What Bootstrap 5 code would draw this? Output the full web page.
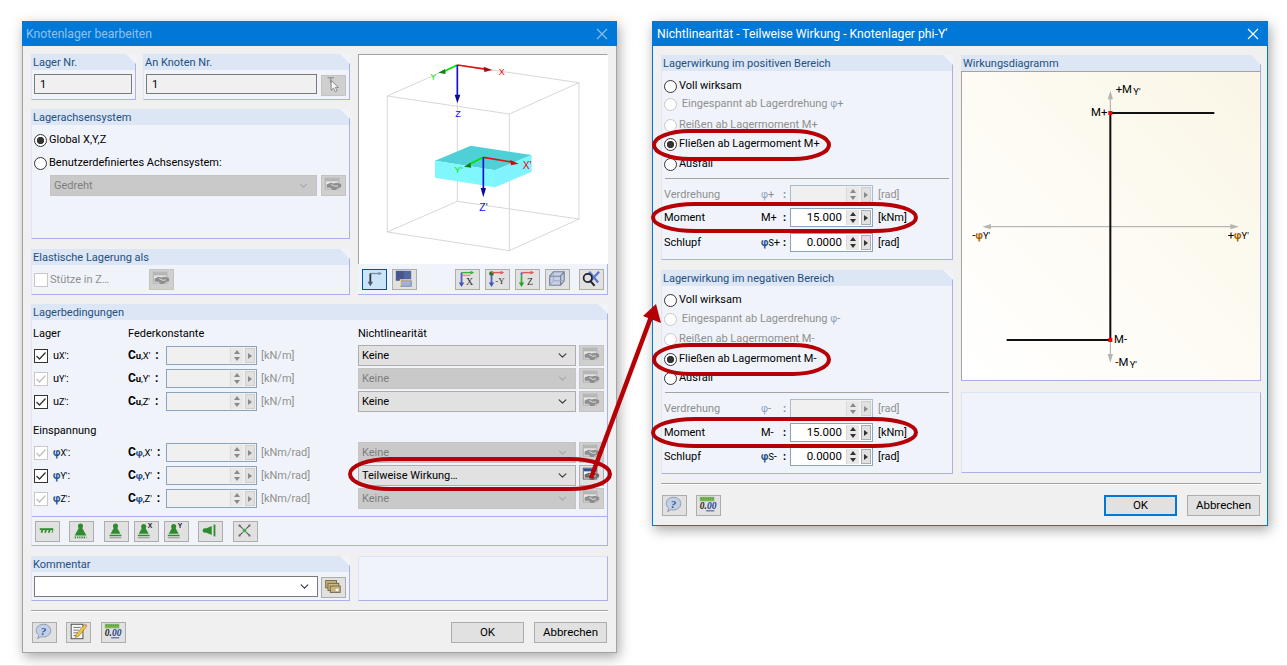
<!DOCTYPE html>
<html lang="de">
<head>
<meta charset="utf-8">
<title>Knotenlager bearbeiten</title>
<link rel="stylesheet" href="https://cdn.jsdelivr.net/npm/bootstrap@5.3.0/dist/css/bootstrap.min.css">
<style>
html,body{height:666px;overflow:hidden;background:#fff}
body{font:11px/16px Roboto,"Noto Sans","Liberation Sans",sans-serif;color:#000;border-bottom:1px solid #e3e3e3}
.desk{position:relative;width:1287px;height:665px}
.dlg{position:absolute;background:#f0f0f0;box-shadow:2px 4px 12px rgba(0,0,0,.35)}
.dlg-a{left:22px;top:21px;width:595px;height:632px;border:1px solid #a3a3a3;border-top:0}
.dlg-b{left:652px;top:21px;width:616px;height:505px;border:1px solid #0078d7;border-top:0}
.dlg-title{height:25px;background:#0078d7;font-size:12.2px;padding:0 9px 0 4px}
.dlg-a .dlg-title{margin:0 -1px;color:#8fc1ee}
.dlg-b .dlg-title{margin:0 -1px;padding-left:5px;color:#fff}
.dlg-a .dlg-body{padding:8px 8px 0}
.dlg-b .dlg-body{padding:9px 6px 0 8px}
.col-l{width:319px}
.col-r{width:250px}
.h-46{height:46px}
.h-130{height:130px}
.h-45{height:45px}
.grp{background:#f0f4fa}
.grp-h{height:16px;background:#dce6f4;color:#24507f;padding-left:2px;line-height:18px;overflow:hidden;border-right:1px solid #aab0e8;clip-path:polygon(0 0,calc(100% - 10px) 0,100% 10px,100% 100%,0 100%)}
.grp-b{border:1px solid #aab0e8;border-top:0;border-left-color:#dce6f4}
.w-105{width:105px}.w-207{width:207px}
.ctl-in.form-control{height:20px;min-height:0;border:1px solid #7a7a7a;border-radius:0;background:#f0f0f0;padding:0 5px;font-size:11px;line-height:18px;color:#000;box-shadow:none}
.w-98{width:98px}.w-171{width:171px}
.ctl-pad{padding-left:2px}
.ctl-pad-a{padding-left:2px;gap:4px}
.tb{width:25px;height:21px;padding:0;background:#e1e1e1;border:1px solid #adadad;border-radius:0;display:inline-flex;align-items:center;justify-content:center;flex:none}
.tb svg{display:block}
.tb.off{background:#cfcfcf;border-color:#c4c4c4}
.tb.act{background:#cce4f7;border-color:#005499}
.form-check-input[type=radio],.form-check-input[type=checkbox]{width:13px;height:13px;margin:0;flex:none;background-color:#fff;border:1px solid #333;box-shadow:none;opacity:1;float:none}
.form-check-input[type=checkbox]{border-radius:0;border-color:#333;width:14px;height:14px}
.form-check-input:checked{background-color:#fff;border-color:#333}
.form-check-input:checked[type=radio]{background-image:radial-gradient(circle,#333 0,#333 3.4px,transparent 3.9px)}
.form-check-input:checked[type=checkbox]{background-image:url("data:image/svg+xml,%3Csvg xmlns='http://www.w3.org/2000/svg' viewBox='0 0 14 14'%3E%3Cpath fill='none' stroke='%23333' stroke-width='1.3' d='M2.5 7l3 3 6-6.5'/%3E%3C/svg%3E");background-size:14px 14px}
.form-check-input:disabled{border-color:#c8c8c8;opacity:1}
.form-check-input:disabled:checked{border-color:#c8c8c8}
.form-check-input:disabled:checked[type=checkbox]{background-image:url("data:image/svg+xml,%3Csvg xmlns='http://www.w3.org/2000/svg' viewBox='0 0 14 14'%3E%3Cpath fill='none' stroke='%23c0c0c0' stroke-width='1.3' d='M2.5 7l3 3 6-6.5'/%3E%3C/svg%3E")}
.rd{height:16px;gap:2px;padding-left:2px}
.dim{color:#8f8f8f}
.form-select.ddl{height:21px;min-height:0;padding:0 18px 0 3px;font-size:11px;line-height:19px;border:1px solid #adadad;border-radius:0;background-color:#e1e1e1;color:#000;box-shadow:none;background-position:right 7px center;background-size:11px 9px;opacity:1}
.form-select.ddl:disabled{background-color:#c9c9c9;border-color:#c4c4c4;color:#7f7f7f;background-image:url("data:image/svg+xml,%3Csvg xmlns='http://www.w3.org/2000/svg' viewBox='0 0 16 16'%3E%3Cpath fill='none' stroke='%23a8a8a8' stroke-width='2' d='m2 5 6 6 6-6'/%3E%3C/svg%3E")}
.form-select.ddl.wht{background-color:#fff;border-color:#7a7a7a}
.w-267{width:267px}.w-284{width:284px}
.ind-sel{padding-left:18px;gap:4px}
.cb-cell{width:117px;margin-top:3px}
.bc-wrap{padding:6px 1px 5px}
.rowg{display:grid;grid-template-columns:95px 38px 91px 101px 218px 28px;height:21px;align-items:center;margin-bottom:2px}
.rowg .tb{margin-left:3px}
.sym{padding-left:1px;display:flex;align-items:center;gap:5px}
.hdrg{display:grid;grid-template-columns:95px 38px 91px 101px 218px;height:16px;align-items:center}
.sub{font-size:9px}
.phi{color:#24508f;font-weight:700;font-size:10px}
.dim .phi{color:#8d9dbb;font-weight:400}
.clb{font-weight:700;font-size:12px;white-space:nowrap;letter-spacing:-.1px}
.clb i{font-style:normal;font-weight:700;font-size:9.5px}
.clb em{font-style:normal;font-weight:400;font-size:9.5px}
.clb u{text-decoration:none;margin-left:5px}
.phb{color:#24508f}
.un-pad{padding-left:4px}
.spn{height:19px;border:1px solid #8aa4bf;background:#f0f0f0;width:91px;flex:none}
.spn.wht{background:#fff;width:83px}
.spn.dm{width:83px;border-color:#a9bccf}
.spn-v{flex:1;text-align:right;padding:0 4px 0 0;font-size:11.5px;line-height:17px}
.spn-ud{width:13px;border-left:1px solid #dadada;background:#e8e8e8;margin:1px 0}
.spn-ud span{flex:1;display:flex;align-items:center;justify-content:center}
.spn-ud span::before{content:"";border:3.5px solid transparent}
.spn-ud .up::before{border-bottom:4px solid #8a8a8a;border-top:0}
.spn-ud .dn::before{border-top:4px solid #8a8a8a;border-bottom:0}
.spn-r{width:10px;margin:1px 1px 1px 2px;background:#e1e1e1;border:1px solid #cfcfcf;display:flex;align-items:center;justify-content:center}
.spn-r::before{content:"";border-left:4px solid #8a8a8a;border-top:3px solid transparent;border-bottom:3px solid transparent}
.spn.wht .spn-ud .up::before{border-bottom-color:#333}
.spn.wht .spn-ud .dn::before{border-top-color:#333}
.spn.wht .spn-r::before{border-left-color:#333}
.spn.wht .spn-r{border-color:#adadad}
.pv{height:210px;border:1px solid #a3a3a3;border-width:1px 0 0 1px;background:#fff;border-right:1px solid #fff}
.pv svg{display:block}
.pvbar{height:31px;padding:5px 0 0 4px;background:#f0f4fa;border:1px solid #aab0e8;border-width:0 1px 1px 0}
.ms-5x{margin-left:5px}
.ms-9x{margin-left:9px}
.ms-10x{margin-left:10px}
.ms-38x{margin-left:38px}
.ms-px{margin-left:1px}
.barg{height:29px;padding:4px 0 0 3px;border-top:1px solid #aab0e8}
.kom{padding:4px 0 0 2px;gap:3px}
.mt-1x{margin-top:1px}
.sp{height:2px;border-top:1px solid #a3a3a3;border-bottom:1px solid #fff}
.foot-row{margin-top:10px;padding:0 1px}
.gap-9x{gap:9px}
.gap-10x{gap:10px}
.pb-btn{height:21px;padding:0;width:73px;font-size:11.5px;line-height:19px;background:#e1e1e1;border:1px solid #adadad;border-radius:0;color:#000}
.pb-btn.df{border:2px solid #0078d7;line-height:17px}
.mt-9{margin-top:9px}.mt-10{margin-top:10px}
.mtx-2{margin-top:2px}.mtx-3{margin-top:3px}.mtx-4{margin-top:4px}.mtx-5{margin-top:5px}.mtx-6{margin-top:6px}.mtx-7{margin-top:7px}.mtx-11{margin-top:11px}
.g-left{width:292px}
.g-right{width:300px}
.rsec{height:205px}.rsec2{height:204px}
.rsp{background:#a3a3a3;height:1px;margin-left:3px;margin-right:3px}
.frm{display:grid;grid-template-columns:97px 29px 83px auto;height:19px;align-items:center;padding-left:2px}
.frm .unit{padding-left:5px}
.sycell{display:flex;justify-content:space-between;padding-right:4px;white-space:nowrap}
.diag{height:310px;background:linear-gradient(to top right,#fff 0,#fdfbf3 50%,#faf5e5 100%);border:1px solid #aab0e8;border-top-color:#a3a3a3;border-left-color:#a3a3a3}
.diag svg{display:block}
.emptyp{height:81px;background:#f0f4fa;border:1px solid #aab0e8;border-top-color:#dce4f8;border-left-color:#dce4f8}
.emptyp.h-45{height:45px}
.anno{position:absolute;left:0;top:0;pointer-events:none}
</style>
</head>
<body>
<svg width="0" height="0" class="position-absolute" aria-hidden="true">
<defs>
<symbol id="s-det" viewBox="0 0 25 21"><rect x="4.500" y="3.500" width="15" height="12" fill="#e4e4e4" stroke="#a9a9a9"/><rect x="5" y="4" width="14" height="3" fill="#b5b5b5"/><path d="M6 10.500l4.500-2 3.500 1 3-1 5 1.500v3.500l-3.500.5-2.500 2.500h-3.500l-2-2.500H6z" fill="#8e8e8e"/><path d="M11 10.500l4 2 3.500-.5" fill="none" stroke="#e8e8e8"/></symbol>
<symbol id="s-det-on" viewBox="0 0 25 21"><rect x="4.500" y="3.500" width="15" height="12" fill="#f4f4f4" stroke="#555"/><rect x="5" y="4" width="14" height="3" fill="#2c4f9c"/><path d="M6 10.500l4.500-2 3.500 1 3-1 5 1.500v3.500l-3.500.5-2.500 2.500h-3.500l-2-2.500H6z" fill="#6b6b6b"/><path d="M11 10.500l4 2 3.500-.5" fill="none" stroke="#eee"/></symbol>
<symbol id="s-pick" viewBox="0 0 25 21"><path d="M7 3h7M10.500 3v6" stroke="#9a9a9a" stroke-width="1.800" fill="none"/><path d="M11 6l0 11 2.600-2.500 2 4 2-1-2-3.800h3.400z" fill="#f6f6f6" stroke="#777" stroke-width=".9"/></symbol>
<symbol id="s-axes" viewBox="0 0 25 21"><path d="M9 5h11" stroke="#7f8ea4" stroke-width="1.500"/><path d="M22 5l-4-2v4z" fill="#7f8ea4"/><path d="M9 5v10" stroke="#333" stroke-width="2"/><path d="M9 19l-3-5h6z" fill="#4a5b73"/></symbol>
<symbol id="s-panes" viewBox="0 0 25 21"><rect x="4" y="2" width="9" height="11" fill="#46568f"/><rect x="13" y="2" width="8" height="11" fill="#5566a4"/><rect x="9" y="13" width="12" height="6" fill="#a5b0d6" stroke="#55649c" stroke-width=".7"/><path d="M9 19v-7h12" stroke="#ffe95a" stroke-width="1.200" fill="none"/></symbol>
<symbol id="s-vx" viewBox="0 0 25 21"><path d="M7 4h12" stroke="#35b435" stroke-width="1.500"/><path d="M21 4l-4-2v4z" fill="#35b435"/><path d="M7 7h10" stroke="#e48585" stroke-width="1.300"/><path d="M7 4v12" stroke="#4a62c8" stroke-width="2"/><path d="M7 20l-3-5h6z" fill="#3f56b8"/><text x="12" y="18" font-family="Liberation Serif" font-size="11" fill="#333">X</text></symbol>
<symbol id="s-vy" viewBox="0 0 25 21"><circle cx="7" cy="5" r="2.600" fill="#1f7a1f"/><path d="M7 4h12" stroke="#e15a5a" stroke-width="1.600"/><path d="M21 4l-4-2v4z" fill="#e15a5a"/><path d="M7 7v9" stroke="#4a62c8" stroke-width="2"/><path d="M7 20l-3-5h6z" fill="#3f56b8"/><text x="11" y="17" font-family="Liberation Serif" font-size="10" fill="#333">-Y</text></symbol>
<symbol id="s-vz" viewBox="0 0 25 21"><path d="M7 4h12" stroke="#e15a5a" stroke-width="1.600"/><path d="M21 4l-4-2v4z" fill="#e15a5a"/><path d="M7 4v3" stroke="#4a62c8" stroke-width="2"/><path d="M7 7v9" stroke="#35b435" stroke-width="2"/><path d="M7 20l-3-5h6z" fill="#28a028"/><text x="13" y="18" font-family="Liberation Serif" font-size="11" fill="#333">Z</text></symbol>
<symbol id="s-box" viewBox="0 0 25 21"><path d="M5 8l4-5h12v10l-4 5H5zM5 8h12v10M17 8l4-5" fill="#c6cfe4" stroke="#76829f" stroke-width="1.300"/><path d="M9 3v10h12M9 13l-4 5" fill="none" stroke="#9ba5c0"/></symbol>
<symbol id="s-zoomx" viewBox="0 0 25 21"><path d="M11 3l10 12M22 3L11 15" stroke="#5b78d0" stroke-width="2.600"/><circle cx="9.500" cy="10" r="4.600" fill="none" stroke="#222" stroke-width="1.900"/><path d="M13 14l4 4.500" stroke="#222" stroke-width="2.200"/></symbol>
<symbol id="s-sup1" viewBox="0 0 25 21"><rect x="5" y="8" width="15" height="2" fill="#2e8b2e"/><path d="M6 13l1-3h2l-1 3zM10 13l1-3h2l-1 3zM14 13l1-3h2l-1 3zM18 13l1-3h1l-1 3z" fill="#2e8b2e"/></symbol>
<symbol id="s-sup2" viewBox="0 0 25 21"><circle cx="12.500" cy="5.500" r="2.800" fill="#2e8b2e"/><path d="M11 7l-5 9h13l-5-9z" fill="#2e8b2e"/><path d="M6 18h13" stroke="#2e8b2e" stroke-dasharray="1.500 1" stroke-width="2"/></symbol>
<symbol id="s-sup3" viewBox="0 0 25 21"><circle cx="12.500" cy="5.500" r="2.800" fill="#2e8b2e"/><path d="M11 7l-4 7h11l-4-7z" fill="#2e8b2e"/><path d="M6 16h13" stroke="#2e8b2e" stroke-width="1.600"/><path d="M6 18.500h13" stroke="#888"/></symbol>
<symbol id="s-sup4" viewBox="0 0 25 21"><circle cx="10.500" cy="6" r="2.800" fill="#2e8b2e"/><path d="M9 7l-4 7h11l-4-7z" fill="#2e8b2e"/><path d="M4 16h13" stroke="#2e8b2e" stroke-width="1.600"/><path d="M4 18.500h13" stroke="#888"/><text x="15" y="8" font-family="Liberation Sans" font-weight="700" font-size="7.500" fill="#222">X</text></symbol>
<symbol id="s-sup5" viewBox="0 0 25 21"><circle cx="10.500" cy="6" r="2.800" fill="#2e8b2e"/><path d="M9 7l-4 7h11l-4-7z" fill="#2e8b2e"/><path d="M4 16h13" stroke="#2e8b2e" stroke-width="1.600"/><path d="M4 18.500h13" stroke="#888"/><text x="15" y="8" font-family="Liberation Sans" font-weight="700" font-size="7.500" fill="#222">Y</text></symbol>
<symbol id="s-sup6" viewBox="0 0 25 21"><circle cx="7.500" cy="10.500" r="2.600" fill="#2e8b2e"/><path d="M8 8.500l7-3v10l-7-3z" fill="#2e8b2e"/><path d="M18 4v13" stroke="#2e8b2e" stroke-width="2"/></symbol>
<symbol id="s-free" viewBox="0 0 25 21"><rect x="10.500" y="8.500" width="4" height="4" fill="#4fa84f"/><path d="M7 5l3.500 3.500M18 5l-3.500 3.500M7 16l3.500-3.500M18 16l-3.500-3.500" stroke="#555" stroke-width="1.200"/><path d="M6 4h2v2H6zM17 4h2v2h-2zM6 15h2v2H6zM17 15h2v2h-2z" fill="#666"/></symbol>
<symbol id="s-folders" viewBox="0 0 25 21"><rect x="5" y="4" width="12" height="8" fill="#c9b582" stroke="#6e633f"/><rect x="7.500" y="7" width="12" height="8" fill="#cdb983" stroke="#6e633f"/><rect x="10" y="10" width="11" height="7" fill="#c9b582" stroke="#6e633f"/><rect x="16" y="13" width="3" height="2.500" fill="#fff"/></symbol>
<symbol id="s-help" viewBox="0 0 25 21"><path d="M12.500 2.500c4.600 0 8 3 8 7s-3.400 7-8 7c-1 0-2 0-2.800-.4L6 18.500l1.200-4C5.600 13.200 4.500 11.500 4.500 9.500c0-4 3.400-7 8-7z" fill="#c2cfe8" stroke="#8b97a8"/><text x="12.500" y="14" text-anchor="middle" font-family="Liberation Serif" font-weight="700" font-style="italic" font-size="12" fill="#2d4f92">?</text></symbol>
<symbol id="s-note" viewBox="0 0 25 21"><rect x="5.500" y="2.500" width="13" height="16" fill="#f6f6f6" stroke="#444"/><path d="M8 6h8M8 9h6M8 12h5M8 15h5" stroke="#666"/><path d="M11 14l9-11 2.500 2-9 11-3.500 1z" fill="#f3c93a" stroke="#7c6414" stroke-width=".6"/><path d="M20 3l2.500 2 1-1.500-2-1.500z" fill="#e58ca0"/></symbol>
<symbol id="s-calc" viewBox="0 0 25 21"><rect x="4" y="2" width="16" height="5" fill="#7dba5a"/><path d="M6 3v2M8.500 3v2M11 3v2M13.500 3v2M16 3v2M18.500 3v2" stroke="#3e7d2a" stroke-width=".8"/><text x="4" y="16" font-family="Liberation Serif" font-weight="700" font-style="italic" font-size="10.500" fill="#222">0.<tspan fill="#23408c">00</tspan></text><path d="M11 17.500h9" stroke="#23408c"/></symbol>
</defs>
</svg>

<div class="desk">
<!-- Knotenlager bearbeiten -->
<section class="dlg dlg-a">
  <div class="dlg-title d-flex align-items-center justify-content-between"><span>Knotenlager bearbeiten</span><svg width="12" height="12" viewBox="0 0 12 12" aria-hidden="true"><path d="M1 1l10 10M11 1L1 11" stroke="#8fc1ee" stroke-width="1.100"/></svg></div>
  <div class="dlg-body">
    <div class="d-flex gap-2">
      <div class="col-l">
        <div class="d-flex justify-content-between h-46">
          <div class="grp w-105 d-flex flex-column"><div class="grp-h">Lager Nr.</div><div class="grp-b flex-grow-1 d-flex align-items-start pt-1 ctl-pad"><input class="form-control ctl-in w-98" value="1" readonly></div></div>
          <div class="grp w-207 d-flex flex-column"><div class="grp-h">An Knoten Nr.</div><div class="grp-b flex-grow-1 d-flex align-items-start pt-1 ctl-pad-a"><input class="form-control ctl-in w-171" value="1" readonly><button class="btn tb off mt-1x" type="button" aria-label="Wählen"><svg width="23" height="19" viewBox="1 1 23 19"><use href="#s-pick"/></svg></button></div></div>
        </div>
        <div class="grp h-130 mt-9 d-flex flex-column">
          <div class="grp-h">Lagerachsensystem</div>
          <div class="grp-b flex-grow-1">
            <label class="rd d-flex align-items-center mtx-7"><input class="form-check-input" type="radio" name="a" checked><span>Global X,Y,Z</span></label>
            <label class="rd d-flex align-items-center mtx-7"><input class="form-check-input" type="radio" name="a"><span>Benutzerdefiniertes Achsensystem:</span></label>
            <div class="d-flex mtx-4 ind-sel"><select class="form-select ddl w-267" disabled aria-label="Achsensystem"><option>Gedreht</option></select><button class="btn tb off" type="button" aria-label="Details"><svg width="23" height="19" viewBox="1 1 23 19"><use href="#s-det"/></svg></button></div>
          </div>
        </div>
        <div class="grp h-46 mt-10 d-flex flex-column">
          <div class="grp-h">Elastische Lagerung als</div>
          <div class="grp-b flex-grow-1 d-flex align-items-start pt-1"><label class="rd d-flex align-items-center dim cb-cell"><input class="form-check-input" type="checkbox" disabled><span>Stütze in Z…</span></label><button class="btn tb off" type="button" aria-label="Details"><svg width="23" height="19" viewBox="1 1 23 19"><use href="#s-det"/></svg></button></div>
        </div>
      </div>
      <div class="col-r">
        <div class="pv"><svg width="249" height="209" viewBox="12 45 747 627" font-family="Liberation Sans">
          <g fill="none" stroke="#cfcfcf" stroke-width="2.500"><path d="M97 168L463 222 672 128 307 75zM97 576L463 632 672 537 307 484zM97 168V576M463 222V632M672 128V537M307 75V484"/></g>
          <path d="M240 362L347 317 530 345 420 391z" fill="#4fd0d6"/><path d="M240 362L420 391V442L240 413z" fill="#80f8fb"/><path d="M420 391L530 345V395L420 442z" fill="#7ff4ff"/>
          <path d="M307 75L395 88" stroke="#e01010" stroke-width="5"/><path d="M412 90L386 80 388 96z" fill="#a01010"/><text x="431" y="104" fill="#f00000" font-size="27">X</text>
          <path d="M307 75L265 95" stroke="#00e000" stroke-width="5"/><path d="M250 98L270 87 272 102z" fill="#108010"/><text x="226" y="120" fill="#10e010" font-size="27">Y</text>
          <path d="M307 75V170" stroke="#1010e0" stroke-width="5"/><path d="M307 190L299 164H316z" fill="#0a0a90"/><text x="301" y="230" fill="#1010e0" font-size="27">Z</text>
          <path d="M385 352L475 367" stroke="#e01010" stroke-width="5"/><path d="M491 371L466 360 468 376z" fill="#c01010"/><text x="503" y="386" fill="#f00000" font-size="31">X'</text>
          <path d="M385 352L340 374" stroke="#00e000" stroke-width="5"/><path d="M327 380L346 368 349 383z" fill="#108010"/><text x="298" y="400" fill="#10e010" font-size="29">Y'</text>
          <path d="M385 352V450" stroke="#1010e0" stroke-width="5"/><path d="M385 472L377 444H393z" fill="#0a0a90"/><text x="373" y="512" fill="#1010e0" font-size="31">Z'</text>
        </svg></div>
        <div class="pvbar d-flex"><button class="btn tb act" type="button" aria-label="Achsen"><svg width="23" height="19" viewBox="1 1 23 19"><use href="#s-axes"/></svg></button><button class="btn tb ms-5x" type="button" aria-label="Ansicht"><svg width="23" height="19" viewBox="1 1 23 19"><use href="#s-panes"/></svg></button><button class="btn tb ms-38x" type="button" aria-label="X"><svg width="23" height="19" viewBox="1 1 23 19"><use href="#s-vx"/></svg></button><button class="btn tb ms-5x" type="button" aria-label="-Y"><svg width="23" height="19" viewBox="1 1 23 19"><use href="#s-vy"/></svg></button><button class="btn tb ms-5x" type="button" aria-label="Z"><svg width="23" height="19" viewBox="1 1 23 19"><use href="#s-vz"/></svg></button><button class="btn tb ms-5x" type="button" aria-label="Iso"><svg width="23" height="19" viewBox="1 1 23 19"><use href="#s-box"/></svg></button><button class="btn tb ms-9x" type="button" aria-label="Zoom"><svg width="23" height="19" viewBox="1 1 23 19"><use href="#s-zoomx"/></svg></button></div>
      </div>
    </div>

    <div class="grp mt-9">
      <div class="grp-h">Lagerbedingungen</div>
      <div class="grp-b">
        <div class="bc-wrap">
          <div class="hdrg"><span>Lager</span><span class="text-nowrap">Federkonstante</span><span></span><span></span><span>Nichtlinearität</span></div>
          <div class="rowg mtx-3"><div class="sym"><input class="form-check-input" type="checkbox" checked aria-label="ux"><span>u<span class="sub">X'</span>:</span></div><span class="clb">C<i>u</i><em>,X'</em><u>:</u></span><div class="spn d-flex"><span class="spn-v"></span><span class="spn-ud d-flex flex-column"><span class="up"></span><span class="dn"></span></span><span class="spn-r"></span></div><span class="dim un-pad">[kN/m]</span><select class="form-select ddl" aria-label="ux"><option>Keine</option></select><button class="btn tb off" type="button" aria-label="Details"><svg width="23" height="19" viewBox="1 1 23 19"><use href="#s-det"/></svg></button></div>
          <div class="rowg"><div class="sym"><input class="form-check-input" type="checkbox" checked disabled aria-label="uy"><span>u<span class="sub">Y'</span>:</span></div><span class="clb">C<i>u</i><em>,Y'</em><u>:</u></span><div class="spn d-flex"><span class="spn-v"></span><span class="spn-ud d-flex flex-column"><span class="up"></span><span class="dn"></span></span><span class="spn-r"></span></div><span class="dim un-pad">[kN/m]</span><select class="form-select ddl" disabled aria-label="uy"><option>Keine</option></select><button class="btn tb off" type="button" aria-label="Details"><svg width="23" height="19" viewBox="1 1 23 19"><use href="#s-det"/></svg></button></div>
          <div class="rowg"><div class="sym"><input class="form-check-input" type="checkbox" checked aria-label="uz"><span>u<span class="sub">Z'</span>:</span></div><span class="clb">C<i>u</i><em>,Z'</em><u>:</u></span><div class="spn d-flex"><span class="spn-v"></span><span class="spn-ud d-flex flex-column"><span class="up"></span><span class="dn"></span></span><span class="spn-r"></span></div><span class="dim un-pad">[kN/m]</span><select class="form-select ddl" aria-label="uz"><option>Keine</option></select><button class="btn tb off" type="button" aria-label="Details"><svg width="23" height="19" viewBox="1 1 23 19"><use href="#s-det"/></svg></button></div>
          <div class="hdrg mtx-11"><span class="text-nowrap">Einspannung</span></div>
          <div class="rowg mtx-3"><div class="sym"><input class="form-check-input" type="checkbox" checked disabled aria-label="phix"><span><span class="phi">φ</span><span class="sub">X'</span>:</span></div><span class="clb">C<i class="phb">φ</i><em>,X'</em><u>:</u></span><div class="spn d-flex"><span class="spn-v"></span><span class="spn-ud d-flex flex-column"><span class="up"></span><span class="dn"></span></span><span class="spn-r"></span></div><span class="dim un-pad">[kNm/rad]</span><select class="form-select ddl" disabled aria-label="phix"><option>Keine</option></select><button class="btn tb off" type="button" aria-label="Details"><svg width="23" height="19" viewBox="1 1 23 19"><use href="#s-det"/></svg></button></div>
          <div class="rowg"><div class="sym"><input class="form-check-input" type="checkbox" checked aria-label="phiy"><span><span class="phi">φ</span><span class="sub">Y'</span>:</span></div><span class="clb">C<i class="phb">φ</i><em>,Y'</em><u>:</u></span><div class="spn d-flex"><span class="spn-v"></span><span class="spn-ud d-flex flex-column"><span class="up"></span><span class="dn"></span></span><span class="spn-r"></span></div><span class="dim un-pad">[kNm/rad]</span><select class="form-select ddl" aria-label="phiy"><option>Teilweise Wirkung…</option></select><button class="btn tb" type="button" aria-label="Details"><svg width="23" height="19" viewBox="1 1 23 19"><use href="#s-det-on"/></svg></button></div>
          <div class="rowg"><div class="sym"><input class="form-check-input" type="checkbox" checked disabled aria-label="phiz"><span><span class="phi">φ</span><span class="sub">Z'</span>:</span></div><span class="clb">C<i class="phb">φ</i><em>,Z'</em><u>:</u></span><div class="spn d-flex"><span class="spn-v"></span><span class="spn-ud d-flex flex-column"><span class="up"></span><span class="dn"></span></span><span class="spn-r"></span></div><span class="dim un-pad">[kNm/rad]</span><select class="form-select ddl" disabled aria-label="phiz"><option>Keine</option></select><button class="btn tb off" type="button" aria-label="Details"><svg width="23" height="19" viewBox="1 1 23 19"><use href="#s-det"/></svg></button></div>
        </div>
        <div class="barg d-flex">
          <button class="btn tb" type="button" aria-label="Lager 1"><svg width="23" height="19" viewBox="1 1 23 19"><use href="#s-sup1"/></svg></button><button class="btn tb ms-9x" type="button" aria-label="Lager 2"><svg width="23" height="19" viewBox="1 1 23 19"><use href="#s-sup2"/></svg></button><button class="btn tb ms-10x" type="button" aria-label="Lager 3"><svg width="23" height="19" viewBox="1 1 23 19"><use href="#s-sup3"/></svg></button><button class="btn tb ms-5x" type="button" aria-label="Lager X"><svg width="23" height="19" viewBox="1 1 23 19"><use href="#s-sup4"/></svg></button><button class="btn tb ms-5x" type="button" aria-label="Lager Y"><svg width="23" height="19" viewBox="1 1 23 19"><use href="#s-sup5"/></svg></button><button class="btn tb ms-9x" type="button" aria-label="Lager Wand"><svg width="23" height="19" viewBox="1 1 23 19"><use href="#s-sup6"/></svg></button><button class="btn tb ms-10x" type="button" aria-label="Frei"><svg width="23" height="19" viewBox="1 1 23 19"><use href="#s-free"/></svg></button>
        </div>
      </div>
    </div>

    <div class="d-flex gap-2 mt-10">
      <div class="grp col-l h-45 d-flex flex-column"><div class="grp-h">Kommentar</div><div class="grp-b flex-grow-1 d-flex kom"><select class="form-select ddl wht w-284" aria-label="Kommentar"><option></option></select><button class="btn tb mt-1x" type="button" aria-label="Kommentare"><svg width="23" height="19" viewBox="1 1 23 19"><use href="#s-folders"/></svg></button></div></div>
      <div class="col-r emptyp h-45"></div>
    </div>

    <div class="sp mt-9"></div>
    <div class="d-flex justify-content-between foot-row">
      <div class="d-flex gap-9x"><button class="btn tb" type="button" aria-label="Hilfe"><svg width="23" height="19" viewBox="1 1 23 19"><use href="#s-help"/></svg></button><button class="btn tb" type="button" aria-label="Notiz"><svg width="23" height="19" viewBox="1 1 23 19"><use href="#s-note"/></svg></button><button class="btn tb ms-px" type="button" aria-label="Rechner"><svg width="23" height="19" viewBox="1 1 23 19"><use href="#s-calc"/></svg></button></div>
      <div class="d-flex gap-10x"><button class="btn pb-btn" type="button">OK</button><button class="btn pb-btn" type="button">Abbrechen</button></div>
    </div>
  </div>
</section>

<!-- Nichtlinearität -->
<section class="dlg dlg-b">
  <div class="dlg-title d-flex align-items-center justify-content-between"><span>Nichtlinearität - Teilweise Wirkung - Knotenlager phi-Y'</span><svg width="12" height="12" viewBox="0 0 12 12" aria-hidden="true"><path d="M1 1l10 10M11 1L1 11" stroke="#fff" stroke-width="1.100"/></svg></div>
  <div class="dlg-body">
    <div class="d-flex gap-2">
      <div class="g-left">
        <div class="grp rsec d-flex flex-column"><div class="grp-h">Lagerwirkung im positiven Bereich</div><div class="grp-b flex-grow-1">
          <label class="rd d-flex align-items-center mtx-7"><input class="form-check-input" type="radio" name="p"><span>Voll wirksam</span></label>
          <label class="rd d-flex align-items-center mtx-2 dim"><input class="form-check-input" type="radio" name="p" disabled><span>&nbsp;Eingespannt ab Lagerdrehung <span class="phi">φ</span>+</span></label>
          <label class="rd d-flex align-items-center mtx-5 dim"><input class="form-check-input" type="radio" name="p" disabled><span>Reißen ab Lagermoment M+</span></label>
          <label class="rd d-flex align-items-center mtx-3"><input class="form-check-input" type="radio" name="p" checked><span>Fließen ab Lagermoment M+</span></label>
          <label class="rd d-flex align-items-center mtx-4"><input class="form-check-input" type="radio" name="p"><span>Ausfall</span></label>
          <div class="rsp mtx-6"></div>
          <div class="frm mtx-6"><span class="dim">Verdrehung</span><span class="sycell dim"><span><span class="phi">φ</span>+</span><b>:</b></span><div class="spn dm d-flex"><span class="spn-v"></span><span class="spn-ud d-flex flex-column"><span class="up"></span><span class="dn"></span></span><span class="spn-r"></span></div><span class="unit dim">[rad]</span></div>
          <div class="frm mtx-4"><span>Moment</span><span class="sycell"><span>M+</span><b>:</b></span><div class="spn wht d-flex"><span class="spn-v">15.000</span><span class="spn-ud d-flex flex-column"><span class="up"></span><span class="dn"></span></span><span class="spn-r"></span></div><span class="unit">[kNm]</span></div>
          <div class="frm mtx-6"><span>Schlupf</span><span class="sycell"><span><span class="phi">φ</span><span class="sub">S</span>+</span><b>:</b></span><div class="spn wht d-flex"><span class="spn-v">0.0000</span><span class="spn-ud d-flex flex-column"><span class="up"></span><span class="dn"></span></span><span class="spn-r"></span></div><span class="unit">[rad]</span></div>
        </div></div>
        <div class="grp rsec2 mt-10 d-flex flex-column"><div class="grp-h">Lagerwirkung im negativen Bereich</div><div class="grp-b flex-grow-1">
          <label class="rd d-flex align-items-center mtx-6"><input class="form-check-input" type="radio" name="n"><span>Voll wirksam</span></label>
          <label class="rd d-flex align-items-center mtx-3 dim"><input class="form-check-input" type="radio" name="n" disabled><span>&nbsp;Eingespannt ab Lagerdrehung <span class="phi">φ</span>-</span></label>
          <label class="rd d-flex align-items-center mtx-4 dim"><input class="form-check-input" type="radio" name="n" disabled><span>Reißen ab Lagermoment M-</span></label>
          <label class="rd d-flex align-items-center mtx-4"><input class="form-check-input" type="radio" name="n" checked><span>Fließen ab Lagermoment M-</span></label>
          <label class="rd d-flex align-items-center mtx-3"><input class="form-check-input" type="radio" name="n"><span>Ausfall</span></label>
          <div class="rsp mtx-6"></div>
          <div class="frm mtx-6"><span class="dim">Verdrehung</span><span class="sycell dim"><span><span class="phi">φ</span>-</span><b>:</b></span><div class="spn dm d-flex"><span class="spn-v"></span><span class="spn-ud d-flex flex-column"><span class="up"></span><span class="dn"></span></span><span class="spn-r"></span></div><span class="unit dim">[rad]</span></div>
          <div class="frm mtx-5"><span>Moment</span><span class="sycell"><span>M-</span><b>:</b></span><div class="spn wht d-flex"><span class="spn-v">15.000</span><span class="spn-ud d-flex flex-column"><span class="up"></span><span class="dn"></span></span><span class="spn-r"></span></div><span class="unit">[kNm]</span></div>
          <div class="frm mtx-5"><span>Schlupf</span><span class="sycell"><span><span class="phi">φ</span><span class="sub">S</span>-</span><b>:</b></span><div class="spn wht d-flex"><span class="spn-v">0.0000</span><span class="spn-ud d-flex flex-column"><span class="up"></span><span class="dn"></span></span><span class="spn-r"></span></div><span class="unit">[rad]</span></div>
        </div></div>
      </div>
      <div class="g-right">
        <div class="grp-h">Wirkungsdiagramm</div>
        <div class="diag"><svg width="298" height="308" viewBox="21 66 894 924" font-family="Roboto,sans-serif" font-size="34">
          <path d="M105 530H830" stroke="#a8a8a8" stroke-width="3"/><path d="M82 530l26-8v16zM852 530l-26-8v16z" fill="#b5b5b5"/>
          <path d="M466 145V915" stroke="#a8a8a8" stroke-width="3"/><path d="M466 122l-8 26h16zM466 938l-8-26h16z" fill="#b5b5b5"/>
          <path d="M778 189H466V870H155" fill="none" stroke="#111" stroke-width="6"/>
          <rect x="460" y="183" width="12" height="12" fill="#f00"/><rect x="460" y="864" width="12" height="12" fill="#f00"/>
          <text x="482" y="128">+M<tspan font-size="28" dy="6" dx="4">Y'</tspan></text>
          <text x="408" y="199">M+</text><text x="477" y="880">M-</text>
          <text x="481" y="947">-M<tspan font-size="28" dy="6" dx="4">Y'</tspan></text>
          <text x="52" y="568">-<tspan font-size="30" fill="#a35d00" font-weight="700">φ</tspan><tspan font-size="28">Y'</tspan></text>
          <text x="818" y="568">+<tspan font-size="30" fill="#a35d00" font-weight="700">φ</tspan><tspan font-size="28">Y'</tspan></text>
        </svg></div>
        <div class="emptyp mtx-11"></div>
      </div>
    </div>
    <div class="sp mt-9"></div>
    <div class="d-flex justify-content-between foot-row">
      <div class="d-flex gap-9x"><button class="btn tb" type="button" aria-label="Hilfe"><svg width="23" height="19" viewBox="1 1 23 19"><use href="#s-help"/></svg></button><button class="btn tb" type="button" aria-label="Rechner"><svg width="23" height="19" viewBox="1 1 23 19"><use href="#s-calc"/></svg></button></div>
      <div class="d-flex gap-10x"><button class="btn pb-btn df" type="button">OK</button><button class="btn pb-btn" type="button">Abbrechen</button></div>
    </div>
  </div>
</section>

<svg class="anno" width="1287" height="665" fill="none" stroke="#b50006" stroke-width="4" aria-hidden="true">
  <rect x="350" y="459" width="260" height="30" rx="40" ry="15"/>
  <rect x="654" y="131" width="175" height="28" rx="36" ry="14"/>
  <rect x="653" y="204" width="263" height="27" rx="42" ry="13.500"/>
  <rect x="654" y="345" width="175" height="29" rx="36" ry="14.500"/>
  <rect x="653" y="419" width="263" height="27" rx="42" ry="13.500"/>
  <path d="M591 478L651 317" stroke-width="4.500"/>
  <path d="M656 304L643 316 661 323z" fill="#b50006" stroke="none"/>
</svg>
</div>
</body>
</html>
